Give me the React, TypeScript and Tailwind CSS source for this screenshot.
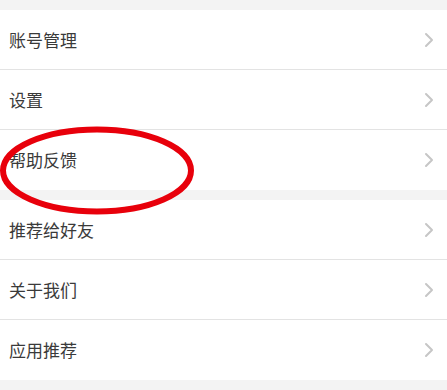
import React from "react";

const Chevron = () => (
  <svg width="10" height="16" viewBox="0 0 10 16" className="shrink-0">
    <path d="M2 2 L8 8 L2 14" fill="none" stroke="#c6c6c6" strokeWidth="2" strokeLinecap="round" strokeLinejoin="round" />
  </svg>
);

const Row = ({ label, last }: { label: string; last?: boolean }) => (
  <div className={`flex h-[60px] items-center justify-between bg-white pl-[9px] pr-[13px] ${last ? "" : "border-b border-[#e3e3e3]"}`}>
    <span className="text-[17px] text-[#3a3a3a]">{label}</span>
    <Chevron />
  </div>
);

export default function App() {
  return (
    <div
      className="relative h-[390px] w-[447px] overflow-hidden bg-[#f3f3f3] pt-[10px]"
      style={{ fontFamily: '"Noto Sans CJK SC", "Noto Sans", sans-serif' }}
    >
      <div className="flex flex-col">
        <Row label="账号管理" />
        <Row label="设置" />
        <Row label="帮助反馈" last />
      </div>
      <div className="mt-[10px] flex flex-col">
        <Row label="推荐给好友" />
        <Row label="关于我们" />
        <Row label="应用推荐" last />
      </div>
      <svg className="absolute left-0 top-0" width="447" height="390">
        <ellipse cx="97" cy="170.5" rx="94" ry="41" fill="none" stroke="#e8000b" strokeWidth="6" />
      </svg>
    </div>
  );
}
